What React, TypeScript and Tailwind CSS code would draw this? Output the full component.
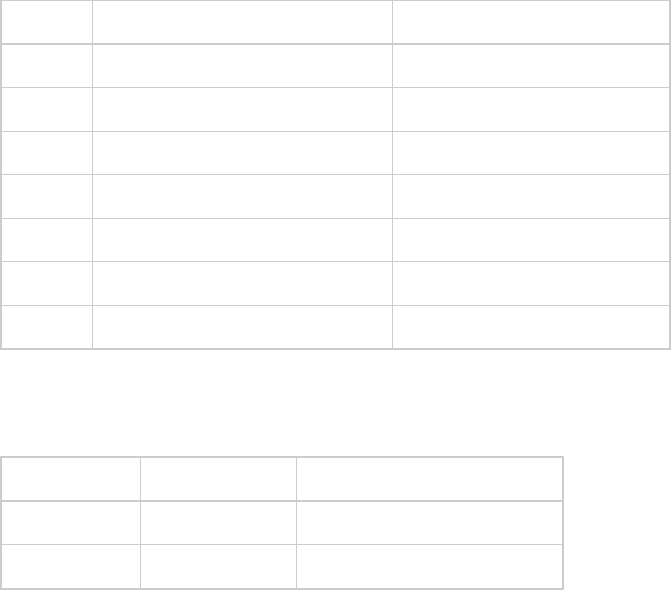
const firstRows = Array.from({ length: 7 });
const secondRows = Array.from({ length: 2 });

export default function App() {
  return (
    <div className="w-[671px] h-[590px] bg-white overflow-hidden font-['Liberation_Sans',sans-serif] text-sm text-gray-800">
      {/* first table */}
      <table className="w-[671px] border-collapse border-2 border-[#cccccc] -mt-px table-fixed">
        <colgroup>
          <col className="w-[91px]" />
          <col className="w-[300px]" />
          <col />
        </colgroup>
        <thead>
          <tr className="h-[44px]">
            <th className="border border-b-2 border-[#cccccc]"></th>
            <th className="border border-b-2 border-[#cccccc]"></th>
            <th className="border border-b-2 border-[#cccccc]"></th>
          </tr>
        </thead>
        <tbody>
          {firstRows.map((_, i) => (
            <tr key={i} className="h-[43.5px]">
              <td className="border border-[#cccccc]"></td>
              <td className="border border-[#cccccc]"></td>
              <td className="border border-[#cccccc]"></td>
            </tr>
          ))}
        </tbody>
      </table>

      {/* second table */}
      <table className="mt-[106px] w-[564px] border-collapse border-2 border-[#cccccc] table-fixed">
        <colgroup>
          <col className="w-[139px]" />
          <col className="w-[156px]" />
          <col />
        </colgroup>
        <thead>
          <tr className="h-[44px]">
            <th className="border border-b-2 border-[#cccccc]"></th>
            <th className="border border-b-2 border-[#cccccc]"></th>
            <th className="border border-b-2 border-[#cccccc]"></th>
          </tr>
        </thead>
        <tbody>
          {secondRows.map((_, i) => (
            <tr key={i} className="h-[44px]">
              <td className="border border-[#cccccc]"></td>
              <td className="border border-[#cccccc]"></td>
              <td className="border border-[#cccccc]"></td>
            </tr>
          ))}
        </tbody>
      </table>
    </div>
  );
}
